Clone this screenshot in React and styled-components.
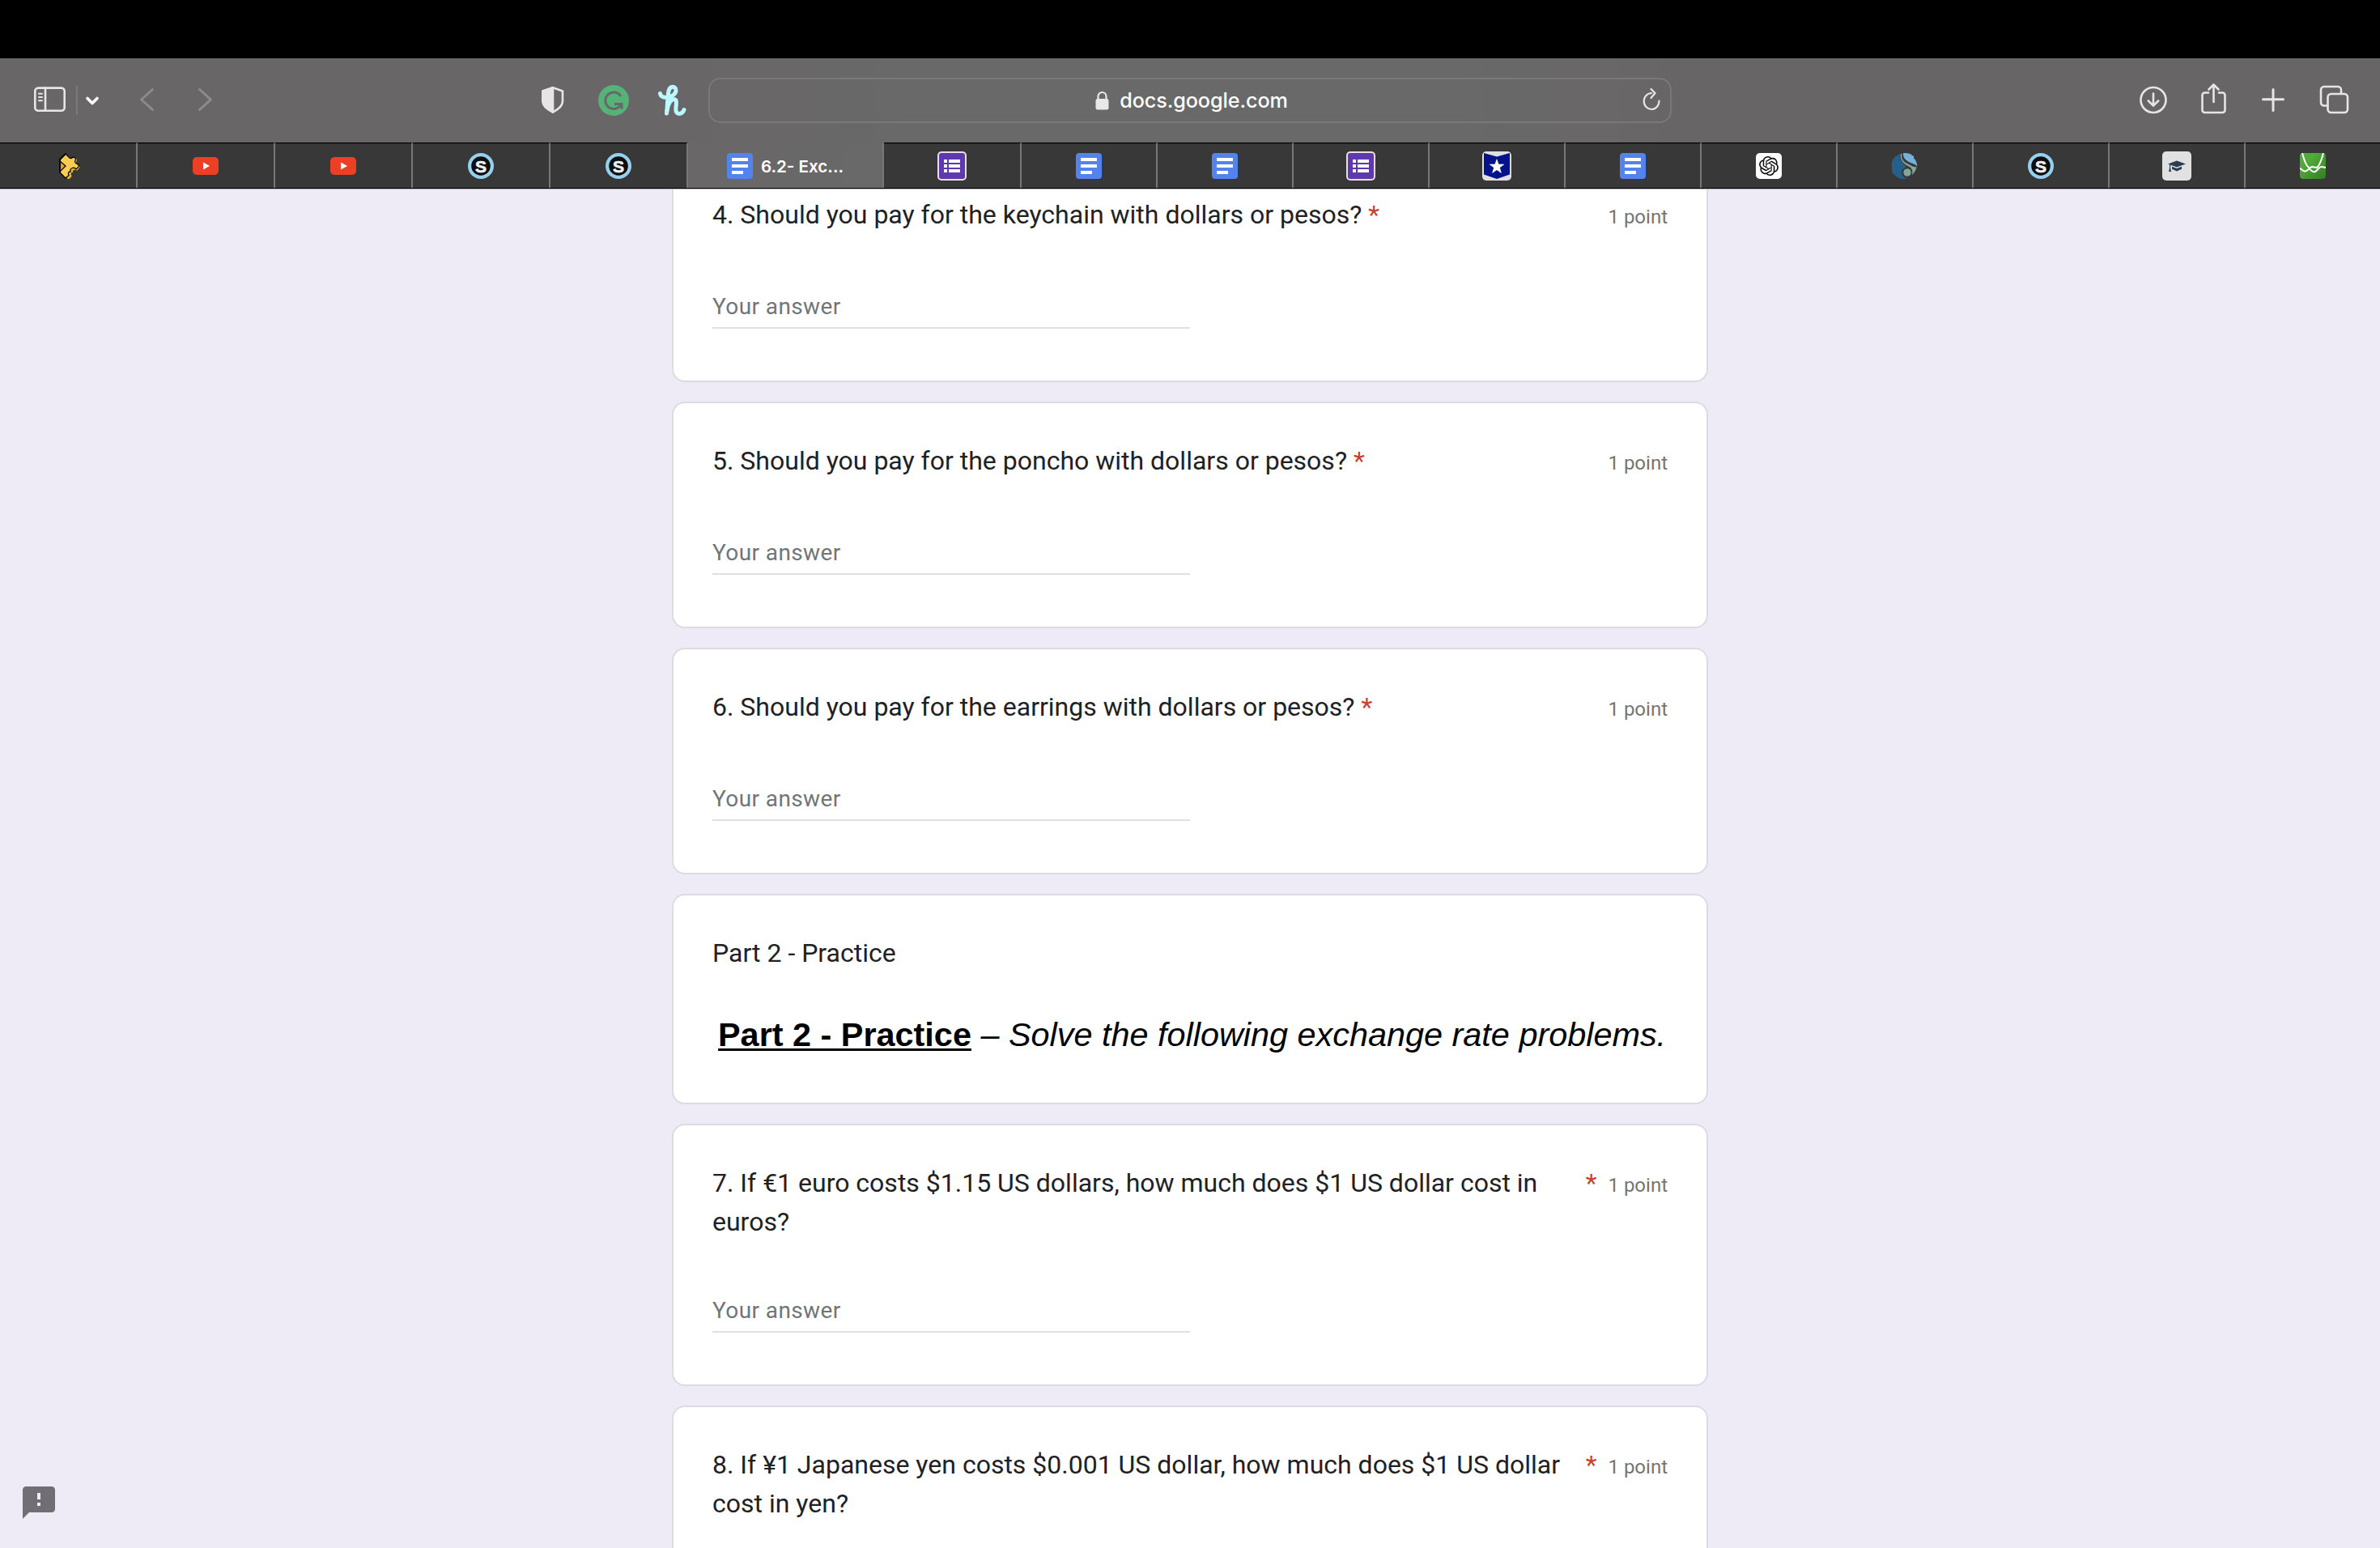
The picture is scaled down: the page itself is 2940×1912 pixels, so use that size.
import styled, { createGlobalStyle } from 'styled-components'
import { MdFeedback } from 'react-icons/md'
import { SiOpenai } from 'react-icons/si'

const GlobalStyle = createGlobalStyle`
  * { box-sizing: border-box; }
  body {
    margin: 0;
    background: #eeebf7;
    font-family: Roboto, sans-serif;
  }
`

const Screen = styled.div`
  display: flex;
  flex-direction: column;
  width: 2940px;
  height: 1912px;
  overflow: hidden;
`

const MenuBarGap = styled.div`
  flex: none;
  height: 72px;
  background: #000;
`

const Toolbar = styled.header`
  flex: none;
  display: grid;
  grid-template-columns: 876px 1188px 876px;
  align-items: center;
  height: 104px;
  background: linear-gradient(90deg, #696667 0, #696667 850px, #696969 1120px, #696969 1800px, #686566 2100px);
`

const Group = styled.div`
  display: flex;
  align-items: center;
  padding-left: ${props => props.$start}px;
`

const Icon = styled.svg`
  flex: none;
  display: block;
  width: ${props => props.$w || 44}px;
  height: 44px;
  margin-left: ${props => props.$gap || 0}px;
  fill: none;
  stroke: ${props => props.$color || '#e8e5e6'};
  stroke-width: ${props => props.$stroke || 2.6};
  stroke-linecap: round;
  stroke-linejoin: round;
`

const Divider = styled.div`
  width: 2px;
  height: 36px;
  margin-left: 10px;
  background: #7c797a;
`

const UrlBar = styled.div`
  display: grid;
  grid-template-columns: 1fr auto 1fr;
  align-items: center;
  height: 56px;
  margin: 0 -1px;
  border: 2px solid #7a7979;
  border-radius: 15px;
  color: #fff;
  font-family: Inter, sans-serif;
  font-size: 25.2px;
  font-weight: 500;
  letter-spacing: -0.1px;
`

const Host = styled.span`
  display: flex;
  align-items: center;
  gap: 13px;
  padding-left: 4px;
`

const Reload = styled.span`
  display: flex;
  justify-content: flex-end;
  padding-right: 9px;
`

const TabBar = styled.nav`
  flex: none;
  display: flex;
  height: 57px;
  border-bottom: 1px solid #000;
`

const Tab = styled.div`
  flex: none;
  display: flex;
  align-items: center;
  justify-content: center;
  gap: 10px;
  width: ${props => props.$w}px;
  padding-top: 1px;
  border-top: 1px solid ${props => props.$active ? '#696768' : '#000'};
  border-right: ${props => props.$last ? 0 : 2}px solid #787677;
  background: ${props => props.$active ? 'linear-gradient(90deg, #696768, #696969)' : '#383838'};
  box-shadow: ${props => props.$active ? 'none' : 'inset 0 1px 0 #2b2a2a'};
  color: #fff;
  font: 600 20.6px Inter, sans-serif;
`

const Favicon = styled.svg`
  flex: none;
  display: block;
  width: ${props => props.$size || 32}px;
  height: ${props => props.$size || 32}px;
`

const Plate = styled.span`
  display: flex;
  align-items: center;
  justify-content: center;
  width: ${props => props.$size || 32}px;
  height: ${props => props.$size || 32}px;
  border-radius: 5px;
  overflow: hidden;
  background: ${props => props.$bg || '#fff'};
`

const Content = styled.main`
  flex: 1;
  min-height: 0;
  overflow: hidden;
  border-top: 1px solid #bcbac2;
`

const Form = styled.div`
  display: flex;
  flex-direction: column;
  gap: 24px;
  width: 1280px;
  margin: -42px auto 0;
`

const Card = styled.section`
  flex: none;
  height: ${props => props.$h ? props.$h + 'px' : 'auto'};
  padding: 47px 48px 64px;
  border: 2px solid #dadce0;
  border-radius: 16px;
  background: #fff;
`

const Heading = styled.div`
  display: flex;
  align-items: flex-start;
  min-height: 53px;
  padding-bottom: 1px;
  color: #202124;
  font-size: 32px;
  line-height: 48px;
`

const Required = styled.span`
  flex: none;
  margin-left: 8px;
  color: #c9402f;
`

const Points = styled.span`
  flex: none;
  margin-top: 3px;
  margin-left: auto;
  padding-left: 14px;
  color: #757575;
  font-size: 24px;
  line-height: 48px;
`

const Answer = styled.div`
  display: flex;
  align-items: flex-end;
  width: 590px;
  height: 112px;
  padding-bottom: 1px;
  border-bottom: 2px solid #e0e0e0;
  color: #70757a;
  font-size: 28px;
  line-height: 48px;
  letter-spacing: 0.4px;
`

const Banner = styled.p`
  margin: 48px 0 0;
  padding-left: 7px;
  color: #000;
  font: italic 41.4px/48px "Liberation Sans", Arial, sans-serif;
  white-space: nowrap;
  b {
    font-style: normal;
    text-decoration: underline;
    text-decoration-thickness: 3px;
    text-underline-offset: 3px;
  }
`

const Feedback = styled(MdFeedback)`
  position: fixed;
  left: 24px;
  top: 1832px;
  width: 48px;
  height: 48px;
  color: #716e74;
`

const Docs = () => (
  <Favicon viewBox='0 0 32 32'>
    <rect width='32' height='32' rx='4' fill='#5383ec' />
    <path d='M6 6h20v4H6zM6 14h20v4H6zM6 22h14v4H6z' fill='#fff' />
  </Favicon>
)

const Forms = () => (
  <Favicon viewBox='0 0 36 36' $size={36}>
    <rect width='36' height='36' rx='5' fill='#e4e0e6' />
    <rect x='2' y='2' width='32' height='32' rx='3' fill='#5f37ae' />
    <path d='M8 10h4v4H8zM14 10h14v4H14zM8 16h4v4H8zM14 16h14v4H14zM8 22h4v4H8zM14 22h14v4H14z' fill='#fff' />
  </Favicon>
)

const YouTube = () => (
  <Favicon viewBox='0 0 32 32'>
    <rect y='5' width='32' height='22' rx='5' fill='#eb4026' />
    <path d='M13 11.5v9l8-4.5z' fill='#fff' />
  </Favicon>
)

const Schoology = () => (
  <Favicon viewBox='0 0 32 32'>
    <circle cx='16' cy='16' r='16' fill='#96d0ef' />
    <circle cx='16' cy='16' r='11.8' fill='#0b0d0f' />
    <text x='16' y='23.5' textAnchor='middle' fontFamily='Liberation Sans, sans-serif' fontWeight='700' fontSize='21' fill='#f0f0f0' stroke='#f0f0f0' strokeWidth='.7'>S</text>
  </Favicon>
)

const Puzzle = () => (
  <Favicon viewBox='0 0 32 32'>
    <path d='M14 2l4 3c0 2 3 3 5 0l4 3-1 4c-1 2 0 3 2 3l3 2-4 5c-1-2-6-2-5 2-3 0-3 3-1 4l-4 5-9-8V9z' fill='#e5b62f' />
    <path d='M6 7.500 13 1l4 4c1 2 4 2 5 0 3 0 4 2 3 4-1 2 0 4 2 4l3 3-4 4c-2-3-8-2-7 3-3 0-3 2-2 4.500l-4 3.500-7-7z' fill='#f6cd52' stroke='#0a0a0a' strokeWidth='1.300' />
    <path d='M6 10l7 6-7 7z' fill='#ee9a36' stroke='#0a0a0a' strokeWidth='1.300' />
    <path d='M6 24V8l7-7' fill='none' stroke='#0a0a0a' strokeWidth='2' />
  </Favicon>
)

const Star = () => (
  <Plate $size={36} $bg='#e0dfe1'>
    <Favicon viewBox='0 0 32 32'>
      <path d='M0 0 16 4.500 32 0V26.500L16 32 0 26.500z' fill='#04128c' />
      <path d='M16 7.800l2.200 6.200 6.600.1-5.300 4 1.900 6.300L16 20.700l-5.400 3.700 1.900-6.300-5.300-4 6.600-.1z' fill='#fff' stroke='#fff' strokeWidth='.6' />
    </Favicon>
  </Plate>
)

const Swirl = () => (
  <Favicon viewBox='0 0 32 32'>
    <path d='M10 1.200A15.500 15.500 0 0 0 20 31.500C14 30.500 11 27 12.500 22 13.500 19 18 18.500 17 16 15 12 8 9 10 1.200z' fill='#265f88' />
    <path d='M10.800 1 12.500.8C11 8 15 11 20 13.500c5 2.500 8 4.500 10.500 3.500-.5 4-3 8-6 10.500 2-5 .5-8.500-3-10.500C15 13.500 9.500 9 10.800 1z' fill='#84a699' />
    <path d='M14 .3C19-.4 23 1 25.500 3.200L27.500 4l-.6 2c3 3 4.500 7 4.400 11C30 14 27 13.500 23 12 17 9.500 13.500 6 14 .3z' fill='#74b1db' />
    <circle cx='19' cy='24' r='5.200' fill='#84a699' stroke='#383838' strokeWidth='1' />
  </Favicon>
)

const GradCap = () => (
  <Plate $size={36} $bg='#e1e1e2'>
    <Favicon viewBox='0 0 36 36' $size={36}>
      <path d='M7 15.500 18 11.500l11 4-11 4z' fill='#2c3e50' />
      <path d='M12 18.700l6 2.200 6-2.200v3L18 24.500l-6-2.800z' fill='#2c3e50' />
      <path d='M18 15.500l-8.500 1.500v3.500M9.500 20.500 8.700 24.500h1.800z' fill='none' stroke='#2c3e50' strokeWidth='1.100' />
    </Favicon>
  </Plate>
)

const Curves = () => (
  <Favicon viewBox='0 0 32 32'>
    <defs>
      <linearGradient id='green' x1='0' y1='0' x2='1' y2='1'>
        <stop offset='.3' stopColor='#50ac38' />
        <stop offset='1' stopColor='#357a27' />
      </linearGradient>
    </defs>
    <rect width='32' height='32' rx='4' fill='url(#green)' />
    <path d='M3 0c2 8 4 15 8 18 2 3 5 6 8 5 4-2 4-6 8-6 2 0 3 1 5 1M29 0c-2 8-4 15-8 18-3 0-3-1-6-1-4 1-5 6-9 5.500-3-.5-4-3-6-3.500' fill='none' stroke='#fff' strokeWidth='2' />
  </Favicon>
)

const ChatGPT = () => (
  <Plate>
    <SiOpenai size={24} color='#111' />
  </Plate>
)

const tabs = [
  { icon: Puzzle, w: 170 },
  { icon: YouTube, w: 170 },
  { icon: YouTube, w: 170 },
  { icon: Schoology, w: 170 },
  { icon: Schoology, w: 170 },
  { icon: Docs, w: 242, title: '6.2- Exc...' },
  { icon: Forms, w: 170 },
  { icon: Docs, w: 168 },
  { icon: Docs, w: 168 },
  { icon: Forms, w: 168 },
  { icon: Star, w: 168 },
  { icon: Docs, w: 168 },
  { icon: ChatGPT, w: 168 },
  { icon: Swirl, w: 168 },
  { icon: Schoology, w: 168 },
  { icon: GradCap, w: 168 },
  { icon: Curves, w: 166 }
]

const Question = (props) => (
  <Card>
    <Heading>
      <span>{props.text}</span>
      <Required>*</Required>
      <Points>1 point</Points>
    </Heading>
    <Answer>Your answer</Answer>
  </Card>
)

const BrowserToolbar = () => (
  <Toolbar>
    <Group $start={40}>
      <Icon viewBox='0 0 44 44'>
        <rect x='3.300' y='6.600' width='36.400' height='28.100' rx='4' />
        <path d='M16 6.600v28.100' />
        <path d='M8 13.700h4M8 18h4M8 22.300h4' strokeWidth='2' />
      </Icon>
      <Divider />
      <Icon viewBox='0 0 20 44' $w={20} $gap={7} $color='#fff' $stroke={3.6}>
        <path d='M5 19.500l6 6 6-6' />
      </Icon>
      <Icon viewBox='0 0 20 44' $w={20} $gap={49} $color='#8d8b8c' $stroke={3}>
        <path d='M16.500 8.500 2.500 21l14 12.500' />
      </Icon>
      <Icon viewBox='0 0 20 44' $w={20} $gap={51} $color='#8d8b8c' $stroke={3}>
        <path d='M3.500 8.500l14 12.500-14 12.500' />
      </Icon>
      <Icon viewBox='0 0 30 44' $w={30} $gap={405}>
        <path d='M15 6.300 27 10.500V23c0 6-6 10.500-12 13.500C9 33.500 2.500 29 2.500 23V10.500z' />
        <path d='M15 6.300V36.500C9 33.500 2.500 29 2.500 23V10.500z' fill='#e8e5e6' />
      </Icon>
      <Icon viewBox='0 0 40 44' $w={40} $gap={40} $color='#65696a' $stroke={3}>
        <circle cx='20' cy='22' r='19' fill='#57b277' stroke='none' />
        <path d='M29 17A10.300 10.300 0 1 0 29 27.500' strokeLinecap='butt' />
        <path d='M21 26.500h9v6' strokeLinecap='butt' strokeLinejoin='miter' />
      </Icon>
      <Icon viewBox='0 0 36 44' $w={36} $gap={34} $color='#bdf7ff' $stroke={5}>
        <path d='M3.500 13.500C4 18 8 18.500 12 18.500 19 17.500 23.500 13 23 9 22.500 4 15.500 3.500 14 10.500 12.500 18 12.500 30 11.500 38' />
        <path d='M12 35C13 26 17 20.500 20.500 20.500 26 21 22 30 23 35 24 40 31 39.500 33 33.500' />
      </Icon>
    </Group>
    <UrlBar>
      <span />
      <Host>
        <svg width='17' height='24' viewBox='0 0 17 24'>
          <path d='M3.500 11V7a5 5 0 0 1 10 0v4' fill='none' stroke='#e8e8e8' strokeWidth='2.200' />
          <rect x='.5' y='10' width='16' height='13.500' rx='2.500' fill='#e8e8e8' />
        </svg>
        docs.google.com
      </Host>
      <Reload>
        <Icon viewBox='0 0 28 44' $w={28} $stroke={2.2}>
          <path d='M14 13A9.400 10 0 1 0 23.500 22.500M13.500 8l5 5-5 6' />
        </Icon>
      </Reload>
    </UrlBar>
    <Group $start={577}>
      <Icon viewBox='0 0 38 44' $w={38}>
        <circle cx='19' cy='21.500' r='15.500' />
        <path d='M19 13.500v14.500M12.800 22.500l6.200 6.200 6.200-6.200' />
      </Icon>
      <Icon viewBox='0 0 34 44' $w={34} $gap={38}>
        <path d='M11 12.500H6.500a3 3 0 0 0-3 3V34a3 3 0 0 0 3 3h22a3 3 0 0 0 3-3V15.500a3 3 0 0 0-3-3H24' />
        <path d='M17.500 24V3M11.500 8.500l6-6 6 6' />
      </Icon>
      <Icon viewBox='0 0 30 44' $w={30} $gap={42} $stroke={3}>
        <path d='M15 8.500v26M2.500 20.800h25' />
      </Icon>
      <Icon viewBox='0 0 38 44' $w={38} $gap={41}>
        <rect x='11.500' y='14' width='24.500' height='23' rx='4' />
        <path d='M11 28.500H7a4 4 0 0 1-4-4V9a4 4 0 0 1 4-4h17a4 4 0 0 1 4 4v4' />
      </Icon>
    </Group>
  </Toolbar>
)

const App = () => (
  <Screen>
    <GlobalStyle />
    <MenuBarGap />
    <BrowserToolbar />
    <TabBar>
      {tabs.map(({ icon: TabIcon, w, title }, i) => (
        <Tab key={i} $w={w} $active={!!title} $last={i === tabs.length - 1}>
          <TabIcon />
          {title}
        </Tab>
      ))}
    </TabBar>
    <Content>
      <Form>
        <Question text='4. Should you pay for the keychain with dollars or pesos?' />
        <Question text='5. Should you pay for the poncho with dollars or pesos?' />
        <Question text='6. Should you pay for the earrings with dollars or pesos?' />
        <Card $h={260}>
          <Heading>Part 2 - Practice</Heading>
          <Banner><b>Part 2 - Practice</b> – Solve the following exchange rate problems.</Banner>
        </Card>
        <Question text='7. If €1 euro costs $1.15 US dollars, how much does $1 US dollar cost in euros?' />
        <Card>
          <Heading>
            <span>8. If ¥1 Japanese yen costs $0.001 US dollar, how much does $1 US dollar cost in yen?</span>
            <Required>*</Required>
            <Points>1 point</Points>
          </Heading>
        </Card>
      </Form>
    </Content>
    <Feedback />
  </Screen>
)

export default App
